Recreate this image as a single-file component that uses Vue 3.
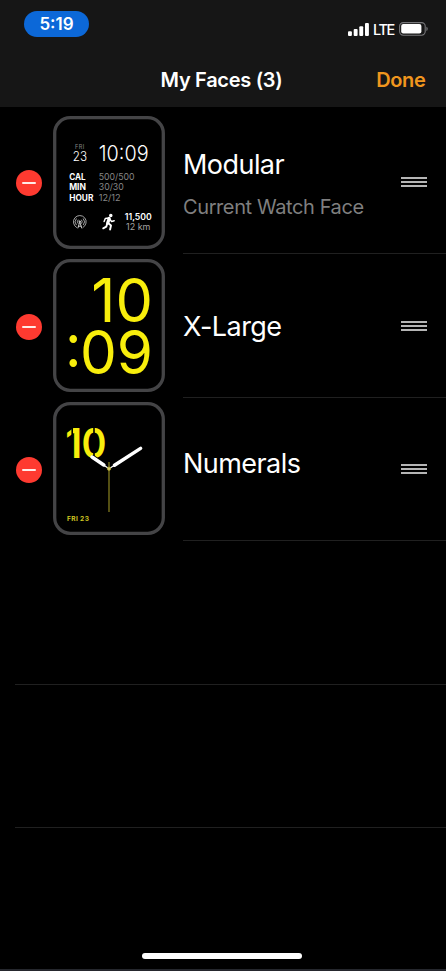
<script setup>
const faces = [
  { id: 'modular', name: 'Modular', note: 'Current Watch Face' },
  { id: 'xlarge', name: 'X-Large' },
  { id: 'numerals', name: 'Numerals' },
]
</script>

<template>
  <div class="screen">
    <header class="header">
      <div class="status">
        <span class="time">5:19</span>
        <div class="indicators">
          <svg class="signal" width="21" height="13" viewBox="0 0 21 13" fill="#fff">
            <rect x="0" y="8.3" width="3.9" height="4.7" rx="1" />
            <rect x="5.7" y="6" width="3.9" height="7" rx="1" />
            <rect x="11.3" y="3.2" width="3.9" height="9.8" rx="1" />
            <rect x="17" y="0" width="3.9" height="13" rx="1" />
          </svg>
          <span class="network">LTE</span>
          <svg class="battery" width="30" height="14" viewBox="0 0 30 14">
            <rect x="0.6" y="0.6" width="25.6" height="12.6" rx="3.6" fill="none" stroke="#77777a" stroke-width="1.1" />
            <rect x="2.2" y="2.1" width="20.2" height="9.5" rx="2" fill="#fff" />
            <path d="M27.4 4.8c1.8.6 1.8 3.6 0 4.3z" fill="#77777a" />
          </svg>
        </div>
      </div>
      <nav class="nav">
        <h1 class="title">My Faces (3)</h1>
        <button class="done">Done</button>
      </nav>
    </header>

    <main class="list">
      <section v-for="face in faces" :key="face.id" class="row">
        <button class="remove" aria-label="Remove"><span class="minus"></span></button>

        <svg class="face" width="112" height="133" viewBox="0 0 112 133">
          <rect x="1.7" y="1.7" width="108.6" height="129.6" rx="15.5" fill="#000" stroke="#444446" stroke-width="3.3" />

          <g v-if="face.id === 'modular'">
            <text x="22" y="33.2" class="grey" font-size="5.6" textLength="9.3">FRI</text>
            <text x="19.8" y="45.4" class="light" font-size="13.2" textLength="14.2" lengthAdjust="spacingAndGlyphs">23</text>
            <text x="45.8" y="45.4" class="light" font-size="21.6" textLength="49.8" lengthAdjust="spacingAndGlyphs">10:09</text>
            <text x="16.2" y="63.8" class="bold" font-size="8.6" textLength="16.4" lengthAdjust="spacingAndGlyphs">CAL</text>
            <text x="16.2" y="74.4" class="bold" font-size="8.6" textLength="16.8" lengthAdjust="spacingAndGlyphs">MIN</text>
            <text x="16.2" y="85" class="bold" font-size="8.6" textLength="24.2" lengthAdjust="spacingAndGlyphs">HOUR</text>
            <text x="45.8" y="63.8" class="grey" font-size="8.8" textLength="35.8" lengthAdjust="spacingAndGlyphs">500/500</text>
            <text x="45.8" y="74.4" class="grey" font-size="8.8" textLength="25" lengthAdjust="spacingAndGlyphs">30/30</text>
            <text x="45.8" y="85" class="grey" font-size="8.8" textLength="21.8" lengthAdjust="spacingAndGlyphs">12/12</text>
            <g fill="none" stroke="#b4b4b4" stroke-width="0.9" stroke-linecap="round">
              <path d="M23.6 111.5a6.4 6.4 0 1 1 6.4 0" />
              <path d="M23.2 108.8a4.5 4.5 0 0 1 0-6M30.4 108.8a4.5 4.5 0 0 0 0-6M25 107.4a2.5 2.5 0 0 1 0-3.4M28.6 107.4a2.5 2.5 0 0 0 0-3.4" />
              <path d="M26.8 106l-1.9 6M26.8 106l1.9 6M25.4 110.2h2.8" stroke="#dadada" />
              <circle cx="26.8" cy="105.6" r="0.8" fill="#ddd" />
            </g>
            <g fill="none" stroke="#fff" stroke-linecap="round" stroke-linejoin="round">
              <circle cx="57.8" cy="99.4" r="1.2" fill="#fff" stroke-width="1.1" />
              <path d="M56.2 102.4l-1.5 4.7" stroke-width="3.2" />
              <path d="M55.8 102l-3.5.5-1.2 3M56.8 103.2l1.8 2.3 2.6-.7" stroke-width="1.4" />
              <path d="M55.4 107.2l2.6 2.3-.9 4M54.2 107.6l-.9 3.1-3.1 1.6" stroke-width="1.9" />
            </g>
            <text x="71.8" y="104.4" class="semi" font-size="8.4" textLength="27" lengthAdjust="spacingAndGlyphs">11,500</text>
            <text x="73" y="113.6" class="grey pale" font-size="8.4" textLength="24.4" lengthAdjust="spacingAndGlyphs">12 km</text>
          </g>

          <text v-else-if="face.id === 'xlarge'" class="yellow regular" font-size="61">
            <tspan x="38.3" y="63" textLength="61.6" lengthAdjust="spacingAndGlyphs">10</tspan>
            <tspan x="12" y="108" textLength="16.5" lengthAdjust="spacingAndGlyphs">:</tspan>
            <tspan x="27" y="115" textLength="73" lengthAdjust="spacingAndGlyphs">09</tspan>
          </text>

          <g v-else>
            <text class="yellow semi" font-size="41.5" y="55.7">
              <tspan x="12.3" textLength="17" lengthAdjust="spacingAndGlyphs">1</tspan><tspan x="28.6" textLength="25" lengthAdjust="spacingAndGlyphs">0</tspan>
            </text>
            <path d="M41 24v34M19.2 24v16" stroke="#000" stroke-width="1.6" />
            <path d="M56 66.7L38.7 54.6" stroke="#000" stroke-width="5" />
            <path d="M56 66.7L39 55M56 66.7L88 46.2" stroke="#fff" stroke-width="1.3" />
            <path d="M50.8 63L39 55M61.5 63.2L87.6 46.4" stroke="#fff" stroke-width="3.5" stroke-linecap="round" />
            <path d="M56 60v50" stroke="#827b1e" stroke-width="1.3" />
            <circle cx="56" cy="66.7" r="1.7" fill="#d8cd68" stroke="#aaa02e" stroke-width="0.7" />
            <text x="13.9" y="118.5" class="yellow bold date" font-size="6.6" textLength="22" lengthAdjust="spacing">FRI 23</text>
          </g>
        </svg>

        <div class="details">
          <div class="label" :class="face.id">
            <span class="name">{{ face.name }}</span>
            <span v-if="face.note" class="note">{{ face.note }}</span>
          </div>
          <span class="grip"><i></i><i></i><i></i></span>
        </div>
      </section>
      <div v-for="n in 2" :key="n" class="empty"></div>
    </main>
    <footer class="footer"><span class="home"></span></footer>
  </div>
</template>

<style>
body {
  background: #000;
}
</style>

<style scoped>
.screen {
  box-sizing: border-box;
  display: flex;
  flex-direction: column;
  width: 446px;
  height: 971px;
  overflow: hidden;
  background: #000;
  border-bottom: 2px solid #25272d;
  color: #fff;
  font-family: Inter, "Liberation Sans", sans-serif;
}
button {
  padding: 0;
  border: 0;
  background: none;
  font: inherit;
}
.header {
  flex: none;
  height: 107px;
  background: #161616;
}
.status {
  display: flex;
  justify-content: space-between;
  height: 53px;
  padding: 11px 17px 0 24px;
  box-sizing: border-box;
}
.time {
  width: 65px;
  height: 26px;
  border-radius: 13px;
  background: #0c68d8;
  font-size: 17px;
  font-weight: 600;
  line-height: 26px;
  text-align: center;
}
.indicators {
  display: flex;
  align-items: center;
  height: 14px;
  margin-top: 11px;
}
.network {
  width: 22px;
  margin: 1px 4px 0 4px;
  font-size: 14.5px;
  font-weight: 500;
  line-height: 14px;
  letter-spacing: -1.4px;
}
.nav {
  display: grid;
  grid-template-columns: 1fr auto 1fr;
  align-items: center;
  height: 54px;
  padding: 0 20.5px 0 17.5px;
}
.title {
  grid-column: 2;
  margin: 0;
  font-size: 20px;
  font-weight: 600;
  letter-spacing: -0.3px;
}
.done {
  justify-self: end;
  color: #f0961e;
  font-size: 20px;
  font-weight: 600;
  letter-spacing: -0.35px;
}
.list {
  flex: 1;
  padding-top: 4px;
}
.row {
  display: flex;
  align-items: flex-start;
  height: 143.4px;
  padding-left: 16px;
}
.remove {
  display: grid;
  place-items: center;
  width: 26px;
  height: 26px;
  margin-top: 59.4px;
  border-radius: 50%;
  background: #fe3a30;
}
.minus {
  width: 14px;
  height: 2px;
  border-radius: 1px;
  background: #ffece9;
}
.face {
  flex: none;
  margin: 4.6px 18px 0 11px;
  font-family: Inter, "Liberation Sans", sans-serif;
  fill: #fff;
}
.light {
  font-weight: 300;
}
.regular {
  font-weight: 400;
}
.semi {
  font-weight: 600;
}
.bold {
  font-weight: 700;
}
.grey {
  fill: #868686;
}
.pale {
  fill: #a2a2a2;
}
.yellow {
  fill: #f8ee0c;
}
.date {
  fill: #cfc620;
}
.details {
  flex: 1;
  display: flex;
  justify-content: space-between;
  box-sizing: border-box;
  height: 143.4px;
  padding-right: 19px;
  border-bottom: 1px solid #202020;
}
.label {
  display: flex;
  flex-direction: column;
  padding-top: 56px;
}
.label.modular {
  padding-top: 37px;
}
.label.numerals {
  padding-top: 49px;
}
.name {
  font-size: 27px;
  line-height: 34px;
  letter-spacing: -0.55px;
}
.note {
  margin-top: 12px;
  color: #7f7f7f;
  font-size: 20px;
  line-height: 26px;
  letter-spacing: -0.4px;
}
.grip {
  display: flex;
  flex-direction: column;
  gap: 2px;
  width: 26px;
  margin-top: 66.4px;
}
.grip i {
  height: 2px;
  background: #b5b5b5;
}
.empty {
  box-sizing: border-box;
  height: 143.4px;
  margin-left: 15px;
  border-bottom: 1px solid #202020;
}
.footer {
  display: flex;
  justify-content: center;
  align-items: flex-start;
  height: 16px;
  padding-right: 2px;
}
.home {
  width: 160px;
  height: 6px;
  border-radius: 3px;
  background: #fff;
}
</style>
